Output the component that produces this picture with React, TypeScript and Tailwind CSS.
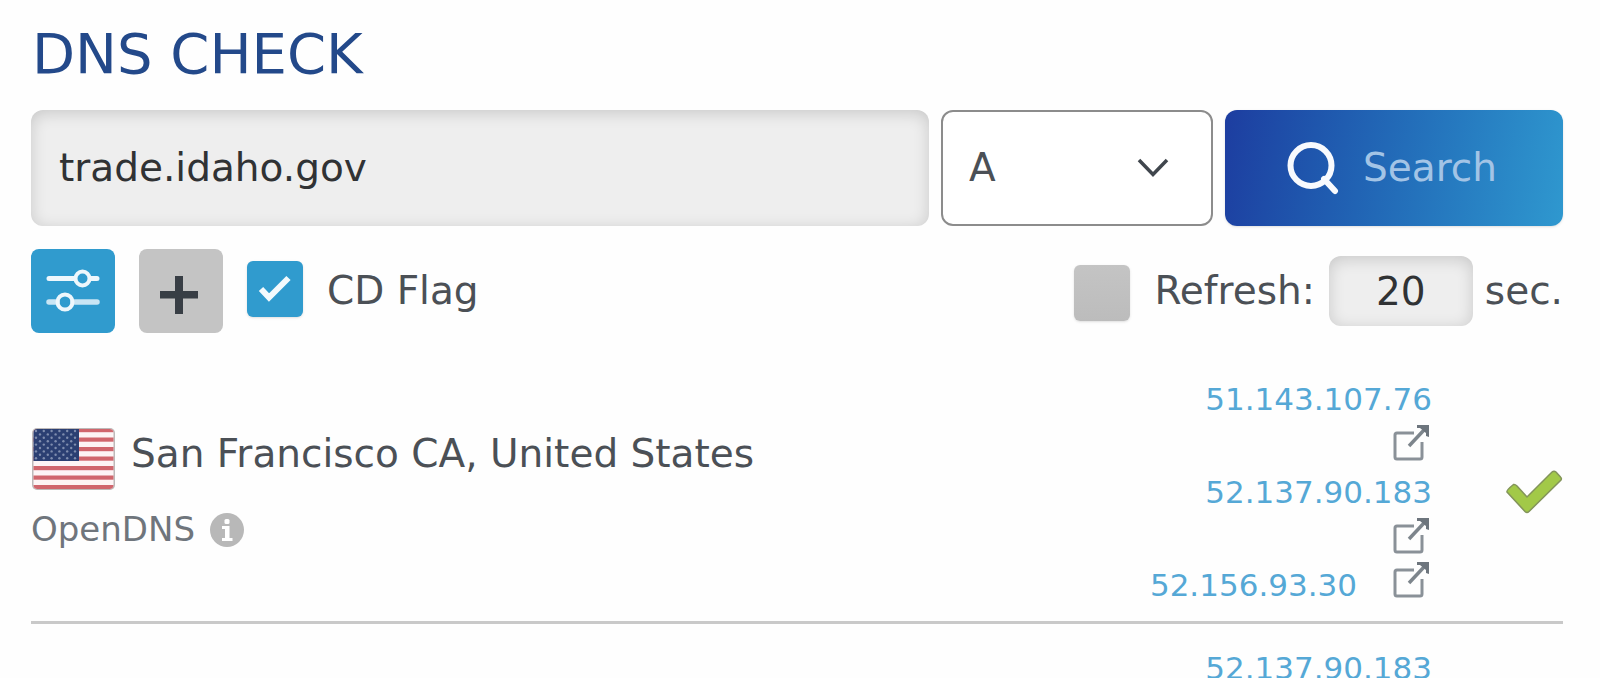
import { useState } from "react";

type Answer = { ip: string; inline?: boolean };

type Server = {
    id: number;
    location?: string;
    provider?: string;
    answers: Answer[];
    resolved?: boolean;
};

const servers: Server[] = [
    {
        id: 1,
        location: "San Francisco CA, United States",
        provider: "OpenDNS",
        answers: [
            { ip: "51.143.107.76" },
            { ip: "52.137.90.183" },
            { ip: "52.156.93.30", inline: true },
        ],
        resolved: true,
    },
    { id: 2, answers: [{ ip: "52.137.90.183" }] },
];

const insetField = "bg-[#eeeeee] shadow-[inset_0_3px_16px_rgba(0,0,0,0.16)] outline-none";

function SlidersIcon() {
    return (
        <svg width="54" height="44" viewBox="0 0 54 44" fill="none" stroke="#eef7fc" strokeLinecap="round">
            <path d="M3 9.5H28M45 9.5H51" strokeWidth="5" />
            <circle cx="36.5" cy="9.5" r="7" strokeWidth="4" />
            <path d="M3 33H11M27 33H51" strokeWidth="5.5" stroke="#c9e5f4" />
            <circle cx="19" cy="33" r="7.5" strokeWidth="4" />
        </svg>
    );
}

function PlusIcon() {
    return (
        <svg width="38" height="38" viewBox="0 0 38 38" fill="#383e45">
            <path d="M15 0H23V15H38V22.5H23V38H15V22.5H0V15H15Z" />
        </svg>
    );
}

function SearchIcon() {
    return (
        <svg width="52" height="54" viewBox="0 0 52 54" fill="none" stroke="#f8fafe" strokeWidth="6">
            <circle cx="24" cy="24.500" r="20.500" />
            <path d="M37 38L48 50" strokeLinecap="round" strokeWidth="6" />
        </svg>
    );
}

function ChevronIcon() {
    return (
        <svg width="32" height="20" viewBox="0 0 32 20" fill="none" stroke="#40464d" strokeWidth="3.5">
            <path d="M2 2L16 16.5L30 2" />
        </svg>
    );
}

function ExternalIcon() {
    return (
        <svg width="37" height="36" viewBox="0 0 37 36" fill="none">
            <path
                d="M21 8H4Q2 8 2 10V32Q2 34 4 34H27Q29 34 29 32V17"
                stroke="#8a9198"
                strokeWidth="3"
            />
            <path d="M16 21L31 5" stroke="#7d858c" strokeWidth="3.5" />
            <path d="M24 0H36V12L33 11V8L27 3H24Z" fill="#6d757d" />
        </svg>
    );
}

function ResolvedIcon() {
    return (
        <svg width="58" height="44" viewBox="0 0 58 44" role="img" aria-label="Resolved">
            <path
                d="M8.5 14.5Q1 20.5 2 22L20 41.5Q22 43.5 24 41.5L56 10Q57 8.5 55.5 7L51 2Q49 .5 47 2L22 27L12 16Q10 14 8.5 14.5Z"
                fill="#a2c948"
                stroke="#83945a"
                strokeWidth="1.5"
            />
        </svg>
    );
}

function InfoIcon() {
    return (
        <svg width="36" height="36" viewBox="0 0 36 36">
            <circle cx="18" cy="18" r="17" fill="#b8b8b8" />
            <rect x="15.5" y="7" width="5" height="5" rx="1.5" fill="#fff" />
            <path d="M13 14H20.5V26H23.5V29H13V26H16V17H13Z" fill="#fff" />
        </svg>
    );
}

function UsFlag() {
    const stripes = [0, 1, 2, 3, 4, 5, 6];
    const starRows = [0, 1, 2, 3, 4, 5, 6, 7, 8];
    return (
        <svg width="84" height="64" viewBox="0 0 84 64" role="img" aria-label="United States">
            <clipPath id="flag-shape">
                <rect x="2.5" y="2" width="80" height="60" rx="4" />
            </clipPath>
            <rect x="1" y="1" width="83" height="62" rx="5" fill="#bdb9b9" />
            <g clipPath="url(#flag-shape)">
                <rect width="84" height="64" fill="#fdf4f5" />
                {stripes.map((i) => (
                    <rect key={i} x="0" y={1 + i * 9.5} width="84" height="4.2" fill="#d0666d" />
                ))}
                <rect x="0" y="0" width="48" height="34" fill="#2b3f72" />
                {starRows.map((row) =>
                    stripes.slice(0, row % 2 ? 5 : 6).map((col) => (
                        <circle
                            key={`${row}-${col}`}
                            cx={(row % 2 ? 9 : 5) + col * 7.8}
                            cy={4 + row * 3.4}
                            r="1.2"
                            fill="#7f8dae"
                        />
                    ))
                )}
            </g>
        </svg>
    );
}

function AnswerLink({ ip, inline }: Answer) {
    return (
        <div className={inline ? "flex h-[46px] items-start justify-end gap-9" : "flex flex-col items-end"}>
            <a href={`#${ip}`} className="text-[31px] leading-[46px] text-[#55a8d6]">
                {ip}
            </a>
            <a href={`#open-${ip}`} aria-label={`Open ${ip}`} className={inline ? "pr-0.5" : "h-[47px] pt-[3px] pr-0.5"}>
                <ExternalIcon />
            </a>
        </div>
    );
}

export default function App() {
    const [domain, setDomain] = useState("trade.idaho.gov");
    const [recordType, setRecordType] = useState("A");
    const [cdFlag, setCdFlag] = useState(true);
    const [autoRefresh, setAutoRefresh] = useState(false);
    const [seconds, setSeconds] = useState("20");

    return (
        <main className="h-screen overflow-hidden bg-[#fefefe] pt-[18px] pr-[37px] pl-[31px] font-['DejaVu_Sans',sans-serif] text-[39px] text-[#4b5056]">
            <h1 className="pl-px text-[56px] leading-[72px] text-[#23498a]">DNS CHECK</h1>

            <form onSubmit={(e) => e.preventDefault()}>
                <div className="mt-5 flex h-[116px] gap-3">
                    <input
                        type="text"
                        aria-label="Domain"
                        value={domain}
                        onChange={(e) => setDomain(e.target.value)}
                        className={`min-w-0 flex-1 rounded-xl px-7 text-[#303234] ${insetField}`}
                    />
                    <div className="grid w-[272px] items-center">
                        <select
                            aria-label="Record type"
                            value={recordType}
                            onChange={(e) => setRecordType(e.target.value)}
                            className="col-start-1 row-start-1 h-full w-full appearance-none rounded-xl border-2 border-[#8c8c8c] bg-white px-[26px] outline-none"
                        >
                            <option>A</option>
                        </select>
                        <span className="pointer-events-none col-start-1 row-start-1 justify-self-end pr-11">
                            <ChevronIcon />
                        </span>
                    </div>
                    <button
                        type="submit"
                        className="flex w-[338px] items-center justify-center gap-6 rounded-xl bg-linear-100 from-[#1d3da0] to-[#2f98cf] pr-1 text-[#a3c4e6] shadow-sm"
                    >
                        <SearchIcon />
                        Search
                    </button>
                </div>

                <div className="mt-[23px] flex h-[84px] items-center">
                    <button
                        type="button"
                        aria-label="Options"
                        className="flex size-[84px] items-center justify-center rounded-lg bg-[#309bce]"
                    >
                        <SlidersIcon />
                    </button>
                    <button
                        type="button"
                        aria-label="Add server"
                        className="ml-6 flex size-[84px] items-center justify-center rounded-lg bg-[#c4c4c4] pt-2 pr-1"
                    >
                        <PlusIcon />
                    </button>
                    <div className="mb-1 ml-6 grid place-items-center">
                        <input
                            id="cd-flag"
                            type="checkbox"
                            checked={cdFlag}
                            onChange={(e) => setCdFlag(e.target.checked)}
                            className="col-start-1 row-start-1 size-14 appearance-none rounded-md bg-[#c0c0c0] shadow-sm checked:bg-[#309bce]"
                        />
                        {cdFlag && (
                            <svg
                                width="34"
                                height="28"
                                viewBox="0 0 34 28"
                                fill="none"
                                stroke="#f4fafd"
                                strokeWidth="6"
                                className="pointer-events-none col-start-1 row-start-1"
                            >
                                <path d="M3 14L11 22.5L30.5 3" />
                            </svg>
                        )}
                    </div>
                    <label htmlFor="cd-flag" className="pl-6">
                        CD Flag
                    </label>

                    <input
                        id="refresh"
                        type="checkbox"
                        checked={autoRefresh}
                        onChange={(e) => setAutoRefresh(e.target.checked)}
                        className="mt-1 ml-auto size-14 appearance-none rounded-md bg-linear-to-b from-[#c4c4c4] to-[#bcbcbc] shadow-sm"
                    />
                    <label htmlFor="refresh" className="pr-3.5 pl-6">
                        Refresh:
                    </label>
                    <input
                        type="text"
                        aria-label="Refresh interval in seconds"
                        value={seconds}
                        onChange={(e) => setSeconds(e.target.value)}
                        className={`h-[70px] w-36 rounded-xl text-center text-[#303234] ${insetField}`}
                    />
                    <span className="pl-3">sec.</span>
                </div>
            </form>

            <table className="mt-[22px] w-full border-collapse">
                <tbody>
                    {servers.map((s) => (
                        <tr key={s.id} className="border-b-[3px] border-[#c9c9c9]">
                            <td className="pt-[21px] pb-[13px]">
                                {s.location && (
                                    <div className="flex h-[75px] items-center gap-4">
                                        <span className="mt-2">
                                            <UsFlag />
                                        </span>
                                        {s.location}
                                    </div>
                                )}
                                {s.provider && (
                                    <div className="flex h-[75px] items-center gap-3.5 text-[34px] text-[#6f757c]">
                                        {s.provider}
                                        <InfoIcon />
                                    </div>
                                )}
                            </td>
                            <td className="pt-[21px] pb-[13px]">
                                {s.answers.map((a) => (
                                    <AnswerLink key={a.ip} {...a} />
                                ))}
                            </td>
                            <td className="w-[131px] pt-[21px] pb-[13px]">
                                <div className="flex justify-end">{s.resolved && <ResolvedIcon />}</div>
                            </td>
                        </tr>
                    ))}
                </tbody>
            </table>
        </main>
    );
}
